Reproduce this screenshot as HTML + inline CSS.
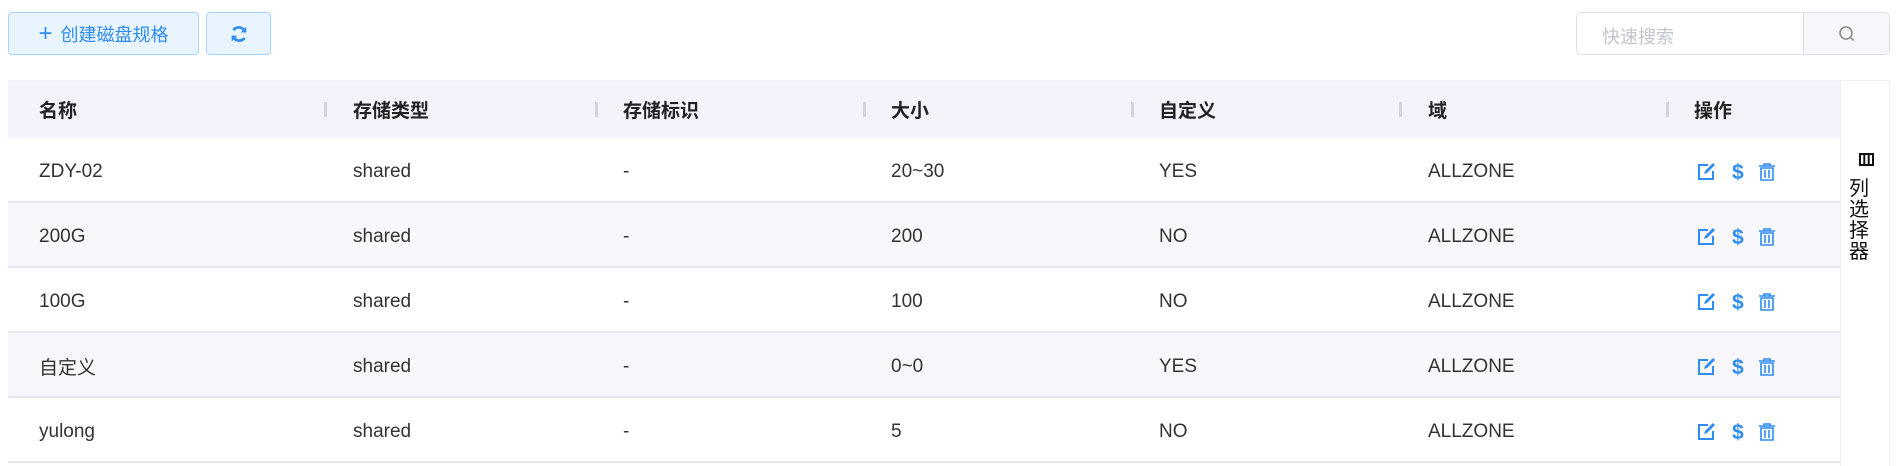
<!DOCTYPE html>
<html><head><meta charset="utf-8"><style>
*{box-sizing:border-box;margin:0;padding:0}
body{width:1898px;height:466px;background:#fff;font-family:"Liberation Sans","Noto Sans CJK SC",sans-serif;color:#333;position:relative;overflow:hidden}
.btn{position:absolute;top:12px;height:43px;background:#e8f4ff;border:1px solid #a9d4ff;border-radius:4px;color:#2f8cf0;font-size:18px;display:flex;align-items:center;justify-content:center}
.search{position:absolute;left:1576px;top:12px;width:314px;height:43px;border:1px solid #dcdfe6;border-radius:5px;overflow:hidden}
.search .ph{position:absolute;left:25px;top:10px;font-size:18px;color:#c0c4cc}
.search .sb{position:absolute;left:226px;top:0;width:88px;height:43px;background:#f5f7fa;border-left:1px solid #dcdfe6}
.table{position:absolute;left:8px;top:80px;width:1832px;border-top:1px solid #ebeef5}
.row{position:relative;height:65px;border-bottom:2px solid #e6e8ee;font-size:19px}
.row.h{height:57px;background:#f3f4fb;font-weight:bold;border-bottom:none;color:#222}
.row.s{background:#f8f8fc}
.c{position:absolute;top:2px;height:100%;display:flex;align-items:center}
.h .c{top:0}
.sep{position:absolute;top:21px;width:3px;height:15px;background:#d3d5da}
.sel{position:absolute;left:1840px;top:80px;width:50px;height:386px;border:1px solid #ebeef5;border-bottom:none;background:#fff}
.ic{position:absolute;top:2px;height:100%;display:flex;align-items:center}
</style></head><body>
<div class="btn" style="left:8px;width:191px"><span style="font-size:24px;margin-right:8px;font-weight:300">+</span>创建磁盘规格</div>
<div class="btn" style="left:206px;width:65px">
<svg width="18" height="18" viewBox="0 0 16 16"><path d="M13.5 6.5A6 6 0 0 0 3 4.5M2.5 9.5A6 6 0 0 0 13 11.5" stroke="#2f8cf0" stroke-width="2.4" fill="none"/><path d="M14.5 1.5v5h-5z M1.5 14.5v-5h5z" fill="#2f8cf0"/></svg></div>
<div class="search"><span class="ph">快速搜索</span><div class="sb"><svg style="position:absolute;left:34px;top:12px" width="18" height="18" viewBox="0 0 18 18"><circle cx="8" cy="8" r="6" stroke="#888" stroke-width="1.5" fill="none"/><path d="M12.5 12.5l3 3" stroke="#888" stroke-width="1.5"/></svg></div></div>
<div class="table">
<div class="row h">
<div class="c" style="left:31px">名称</div><div class="sep" style="left:316px"></div>
<div class="c" style="left:345px">存储类型</div><div class="sep" style="left:587px"></div>
<div class="c" style="left:615px">存储标识</div><div class="sep" style="left:855px"></div>
<div class="c" style="left:883px">大小</div><div class="sep" style="left:1123px"></div>
<div class="c" style="left:1151px">自定义</div><div class="sep" style="left:1391px"></div>
<div class="c" style="left:1420px">域</div><div class="sep" style="left:1658px"></div>
<div class="c" style="left:1686px">操作</div>
</div>
<div class="row"><div class="c" style="left:31px">ZDY-02</div><div class="c" style="left:345px">shared</div><div class="c" style="left:615px">-</div><div class="c" style="left:883px">20~30</div><div class="c" style="left:1151px">YES</div><div class="c" style="left:1420px">ALLZONE</div><div class="ic" style="left:1688px"><svg width="90" height="20" viewBox="0 0 90 20"><path d="M12 3H3v14h14v-8" stroke="#2f8cf0" stroke-width="2" fill="none"/><path d="M8 12l1-3 8-8 2 2-8 8z" fill="#2f8cf0"/><text x="36" y="17" font-size="21" font-weight="bold" fill="#2f8cf0" font-family="Liberation Sans">$</text><path d="M63 4h16M68 4V2h6v2M65 6h12v12H65z M69 8v8M73 8v8" stroke="#2f8cf0" stroke-width="1.6" fill="none"/></svg></div></div>
<div class="row s"><div class="c" style="left:31px">200G</div><div class="c" style="left:345px">shared</div><div class="c" style="left:615px">-</div><div class="c" style="left:883px">200</div><div class="c" style="left:1151px">NO</div><div class="c" style="left:1420px">ALLZONE</div><div class="ic" style="left:1688px"><svg width="90" height="20" viewBox="0 0 90 20"><path d="M12 3H3v14h14v-8" stroke="#2f8cf0" stroke-width="2" fill="none"/><path d="M8 12l1-3 8-8 2 2-8 8z" fill="#2f8cf0"/><text x="36" y="17" font-size="21" font-weight="bold" fill="#2f8cf0" font-family="Liberation Sans">$</text><path d="M63 4h16M68 4V2h6v2M65 6h12v12H65z M69 8v8M73 8v8" stroke="#2f8cf0" stroke-width="1.6" fill="none"/></svg></div></div>
<div class="row"><div class="c" style="left:31px">100G</div><div class="c" style="left:345px">shared</div><div class="c" style="left:615px">-</div><div class="c" style="left:883px">100</div><div class="c" style="left:1151px">NO</div><div class="c" style="left:1420px">ALLZONE</div><div class="ic" style="left:1688px"><svg width="90" height="20" viewBox="0 0 90 20"><path d="M12 3H3v14h14v-8" stroke="#2f8cf0" stroke-width="2" fill="none"/><path d="M8 12l1-3 8-8 2 2-8 8z" fill="#2f8cf0"/><text x="36" y="17" font-size="21" font-weight="bold" fill="#2f8cf0" font-family="Liberation Sans">$</text><path d="M63 4h16M68 4V2h6v2M65 6h12v12H65z M69 8v8M73 8v8" stroke="#2f8cf0" stroke-width="1.6" fill="none"/></svg></div></div>
<div class="row s"><div class="c" style="left:31px">自定义</div><div class="c" style="left:345px">shared</div><div class="c" style="left:615px">-</div><div class="c" style="left:883px">0~0</div><div class="c" style="left:1151px">YES</div><div class="c" style="left:1420px">ALLZONE</div><div class="ic" style="left:1688px"><svg width="90" height="20" viewBox="0 0 90 20"><path d="M12 3H3v14h14v-8" stroke="#2f8cf0" stroke-width="2" fill="none"/><path d="M8 12l1-3 8-8 2 2-8 8z" fill="#2f8cf0"/><text x="36" y="17" font-size="21" font-weight="bold" fill="#2f8cf0" font-family="Liberation Sans">$</text><path d="M63 4h16M68 4V2h6v2M65 6h12v12H65z M69 8v8M73 8v8" stroke="#2f8cf0" stroke-width="1.6" fill="none"/></svg></div></div>
<div class="row"><div class="c" style="left:31px">yulong</div><div class="c" style="left:345px">shared</div><div class="c" style="left:615px">-</div><div class="c" style="left:883px">5</div><div class="c" style="left:1151px">NO</div><div class="c" style="left:1420px">ALLZONE</div><div class="ic" style="left:1688px"><svg width="90" height="20" viewBox="0 0 90 20"><path d="M12 3H3v14h14v-8" stroke="#2f8cf0" stroke-width="2" fill="none"/><path d="M8 12l1-3 8-8 2 2-8 8z" fill="#2f8cf0"/><text x="36" y="17" font-size="21" font-weight="bold" fill="#2f8cf0" font-family="Liberation Sans">$</text><path d="M63 4h16M68 4V2h6v2M65 6h12v12H65z M69 8v8M73 8v8" stroke="#2f8cf0" stroke-width="1.6" fill="none"/></svg></div></div>
</div>
<div class="sel">
<svg style="position:absolute;left:18px;top:72px" width="15" height="13" viewBox="0 0 15 13"><path d="M1 1h13v11H1z M5.3 1v11M9.7 1v11" stroke="#111" stroke-width="2" fill="none"/></svg>
<div style="position:absolute;left:8px;top:98px;width:22px;font-size:20px;line-height:21px;color:#111">列<br>选<br>择<br>器</div>
</div>
</body></html>
